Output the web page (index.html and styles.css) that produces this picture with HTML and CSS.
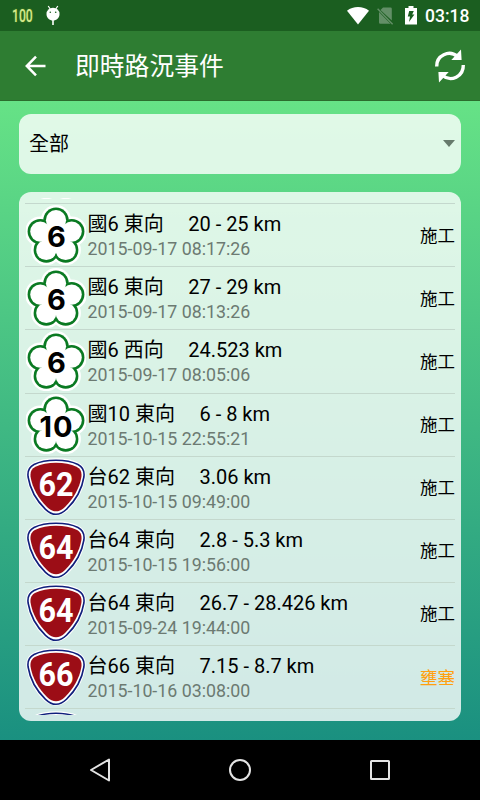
FILE: index.html
```html
<!DOCTYPE html>
<html lang="zh-Hant">
<head>
<meta charset="utf-8">
<title>即時路況事件</title>
<link rel="stylesheet" href="styles.css">
</head>
<body>
<svg class="defs" width="0" height="0">
  <defs>
    <symbol id="flower" viewBox="0 0 60 60">
      <g fill="#fff"><circle cx="30" cy="15.2" r="15.200"/><circle cx="45.7" cy="26.6" r="15.200"/><circle cx="39.7" cy="45" r="15.200"/><circle cx="20.3" cy="45" r="15.200"/><circle cx="14.3" cy="26.6" r="15.200"/></g>
      <g fill="#0a7a22"><circle cx="30" cy="15.2" r="12.7"/><circle cx="45.7" cy="26.6" r="12.7"/><circle cx="39.7" cy="45" r="12.7"/><circle cx="20.3" cy="45" r="12.7"/><circle cx="14.3" cy="26.6" r="12.7"/></g>
      <g fill="#fff"><circle cx="30" cy="15.2" r="10.1"/><circle cx="45.7" cy="26.6" r="10.1"/><circle cx="39.7" cy="45" r="10.1"/><circle cx="20.3" cy="45" r="10.1"/><circle cx="14.3" cy="26.6" r="10.1"/><circle cx="30" cy="31.5" r="13.500"/></g>
    </symbol>
    <symbol id="shield" viewBox="0 0 60 60">
      <path d="M30 1.300C39 1.300 47 2.700 53 6C58.500 9 60.300 14 59.500 20.500C57.500 33 51 45 41.500 54C33.500 60 26.500 60 18.500 54C9 45 2.500 33 .5 20.500C-.3 14 1.500 9 7 6C13 2.700 21 1.300 30 1.300Z" fill="#fff"/>
      <path d="M30 3.200C39 3.200 46 4.500 52 7.500C56.800 10 58.700 14 57.900 20C56 32 49.500 43.500 40.500 52.300C33.500 58.900 26.500 58.900 19.500 52.300C10.500 43.500 4 32 2.100 20C1.300 14 3.200 10 8 7.500C14 4.500 21 3.200 30 3.200Z" fill="#fff" stroke="#101f7c" stroke-width="1.600"/>
      <path d="M30 5.800C38 5.800 45 7 50.500 9.700C54.700 11.900 56 15 55.400 20C53.600 31 47.500 41.500 39 50C33 55.800 27 55.800 21 50C12.500 41.500 6.400 31 4.600 20C4 15 5.300 11.900 9.500 9.700C15 7 22 5.800 30 5.800Z" fill="#9c0d16"/>
    </symbol>
  </defs>
</svg>
<div class="screen">
  <div class="status">
    <span class="level">100</span>
    <svg class="droid" width="16" height="22" viewBox="0 0 16 22"><path d="M3.200 1l2 3M12.800 1l-2 3" stroke="#fff" stroke-width="1.200"/><path d="M1.500 9a6.500 6.200 0 0 1 13 0c0 4-3 6.500-6.500 6.500S1.500 13 1.500 9z" fill="#fff"/><path d="M7.200 15h1.600v5H7.200z" fill="#fff"/><circle cx="5.300" cy="7.300" r=".8" fill="#1b5e20"/><circle cx="10.700" cy="7.300" r=".8" fill="#1b5e20"/></svg>
    <svg class="wifi" width="22" height="18" viewBox="0 0 22 18"><path d="M0 3.700C6-1.200 16-1.200 22 3.700L11 17.500z" fill="#fff"/></svg>
    <svg class="sim" width="17" height="18" viewBox="0 0 17 18"><path d="M6 .5h7.500q1.300 0 1.300 1.300v11.700L3.500 3zM2 5l11.500 11.700H3.300Q2 16.700 2 15.400z" fill="#638f67"/><path d="M.6 1.800l15 15.400" stroke="#638f67" stroke-width="1.400"/></svg>
    <svg class="battery" width="12" height="19" viewBox="0 0 12 19"><path d="M3.500 0h5v2H12v16.500H0V2h3.500z" fill="#fff"/><path d="M4.200 5h4.600L7.200 8.500h2.200L4 16l1-5.500H2.800z" fill="#1b5e20"/></svg>
    <span class="clock">03:18</span>
  </div>
  <div class="toolbar">
    <svg class="back" width="22" height="22" viewBox="0 0 22 22"><path d="M20.500 11H2.500M11 1.700L1.800 11l9.200 9.300" fill="none" stroke="#fff" stroke-width="2.500"/></svg>
    <h1>即時路況事件</h1>
    <svg class="refresh" width="32" height="34" viewBox="0 0 32 34"><path d="M2.700 17.500C2.400 6.500 15 .5 23.500 7.500M29.300 16C29.600 27.500 17 33.500 8.500 26.500" fill="none" stroke="#fff" stroke-width="3.400"/><path d="M27 .5l.6 10.500H17.300zM5 33.500L4.400 23h10.300z" fill="#fff"/></svg>
  </div>
  <main>
    <div class="select"><span>全部</span><i></i></div>
    <div class="panel"><div class="list">
      <div class="row"><svg class="sign" viewBox="0 0 60 60"><use href="#flower"/></svg></div>
      <div class="row"><svg class="sign" viewBox="0 0 60 60"><use href="#flower"/><text class="n1" x="30.500" y="42">6</text></svg><div class="info"><div class="name"><span>國6 東向</span><span>20 - 25 km</span></div><div class="date">2015-09-17 08:17:26</div></div><b>施工</b></div>
      <div class="row"><svg class="sign" viewBox="0 0 60 60"><use href="#flower"/><text class="n1" x="30.500" y="42">6</text></svg><div class="info"><div class="name"><span>國6 東向</span><span>27 - 29 km</span></div><div class="date">2015-09-17 08:13:26</div></div><b>施工</b></div>
      <div class="row"><svg class="sign" viewBox="0 0 60 60"><use href="#flower"/><text class="n1" x="30.500" y="42">6</text></svg><div class="info"><div class="name"><span>國6 西向</span><span>24.523 km</span></div><div class="date">2015-09-17 08:05:06</div></div><b>施工</b></div>
      <div class="row"><svg class="sign" viewBox="0 0 60 60"><use href="#flower"/><text class="n1" x="30" y="43" textLength="33" lengthAdjust="spacing">10</text></svg><div class="info"><div class="name"><span>國10 東向</span><span>6 - 8 km</span></div><div class="date">2015-10-15 22:55:21</div></div><b>施工</b></div>
      <div class="row"><svg class="sign" viewBox="0 0 60 60"><use href="#shield"/><text class="n2" x="30" y="38.500" textLength="35" lengthAdjust="spacingAndGlyphs">62</text></svg><div class="info"><div class="name"><span>台62 東向</span><span>3.06 km</span></div><div class="date">2015-10-15 09:49:00</div></div><b>施工</b></div>
      <div class="row"><svg class="sign" viewBox="0 0 60 60"><use href="#shield"/><text class="n2" x="30" y="38.500" textLength="35" lengthAdjust="spacingAndGlyphs">64</text></svg><div class="info"><div class="name"><span>台64 東向</span><span>2.8 - 5.3 km</span></div><div class="date">2015-10-15 19:56:00</div></div><b>施工</b></div>
      <div class="row"><svg class="sign" viewBox="0 0 60 60"><use href="#shield"/><text class="n2" x="30" y="38.500" textLength="35" lengthAdjust="spacingAndGlyphs">64</text></svg><div class="info"><div class="name"><span>台64 東向</span><span>26.7 - 28.426 km</span></div><div class="date">2015-09-24 19:44:00</div></div><b>施工</b></div>
      <div class="row"><svg class="sign" viewBox="0 0 60 60"><use href="#shield"/><text class="n2" x="30" y="38.500" textLength="35" lengthAdjust="spacingAndGlyphs">66</text></svg><div class="info"><div class="name"><span>台66 東向</span><span>7.15 - 8.7 km</span></div><div class="date">2015-10-16 03:08:00</div></div><b class="jam">壅塞</b></div>
      <div class="row"><svg class="sign" viewBox="0 0 60 60"><use href="#shield"/></svg></div>
    </div></div>
  </main>
  <nav>
    <svg width="24" height="26" viewBox="0 0 24 26"><path d="M21 2.500v21L3 13z" fill="none" stroke="#e4e4e4" stroke-width="2" stroke-linejoin="round"/></svg>
    <svg width="24" height="26" viewBox="0 0 24 26"><circle cx="12" cy="13" r="10" fill="none" stroke="#e4e4e4" stroke-width="2"/></svg>
    <svg width="24" height="26" viewBox="0 0 24 26"><rect x="3" y="4" width="18" height="18" rx=".5" fill="none" stroke="#e4e4e4" stroke-width="2"/></svg>
  </nav>
</div>
</body>
</html>
```
FILE: styles.css
```css
* { box-sizing: border-box; }
body { margin: 0; font-family: Roboto, "Noto Sans CJK TC", sans-serif; color: #000; }
svg { display: block; flex: none; }
.defs { position: absolute; }
.screen { width: 480px; height: 800px; display: flex; flex-direction: column; overflow: hidden; }
.status { height: 31px; flex: none; background: #1b5e20; display: flex; align-items: center; padding: 0 10px 0 12px; }
.level { font: 500 19px/20px "Roboto", sans-serif; color: #d3e88c; width: 21px; white-space: nowrap; transform: scaleX(.64); transform-origin: 0 50%; text-shadow: 0 0 2px #6f9b1e; margin-top: 1px; }
.droid { margin: 0 auto 0 12px; }
.wifi { margin-right: 8px; }
.sim { margin-right: 11px; }
.battery { margin-right: 8px; margin-top: -1px; }
.clock { color: #fff; font-size: 17.500px; font-weight: 500; line-height: 20px; margin-top: 1px; width: 45px; white-space: nowrap; }
.toolbar { height: 70px; flex: none; background: #2e7d32; border-bottom: 1px solid #2b6d2d; display: flex; align-items: center; padding: 0 14px 0 25px; }
.toolbar h1 { margin: 3px auto 0 28px; color: #fff; font-size: 24.800px; line-height: 36px; font-weight: 400; }
main { flex: 1; min-height: 0; padding: 13px 19px 19px; background: linear-gradient(#66e286, #1a9080); display: flex; flex-direction: column; gap: 18px; }
.select, .panel { background: rgba(255,255,255,.8); border-radius: 12px; }
.select { height: 60px; flex: none; display: flex; align-items: center; justify-content: space-between; padding: 0 6px 0 10px; font-size: 20px; }
.select span { margin-top: -3px; }
.select i { border: 6px solid transparent; border-top: 7px solid #667a6c; border-bottom: 0; margin-top: -2px; }
.panel { height: 529px; flex: none; padding: 6px; }
.list { height: 517px; overflow: hidden; display: flex; flex-direction: column; }
.row { height: 63.125px; flex: none; border-bottom: 1px solid #c4d8cd; display: flex; align-items: center; }
.row:first-child { margin-top: -57px; }
.row:first-child .sign { margin-top: -6px; }
.sign { width: 60px; height: 60px; margin-left: 1px; margin-top: -1px; overflow: visible; }
.n1 { font: 700 29px Inter, sans-serif; text-anchor: middle; }
.n2 { font: 700 34px Roboto, sans-serif; text-anchor: middle; fill: #fff; }
.info { flex: 1; padding: 2px 0 0 1.500px; white-space: nowrap; }
.name { font-size: 20px; line-height: 26px; display: flex; gap: 24.500px; }
.date { font-size: 17.800px; line-height: 24px; color: #6c7a72; }
.row b { font-weight: 400; font-size: 17.500px; margin-top: -2px; }
.row .jam { color: #ffa010; }
nav { height: 60px; flex: none; background: #000; display: flex; justify-content: space-between; align-items: center; padding: 0 88px; }
```
